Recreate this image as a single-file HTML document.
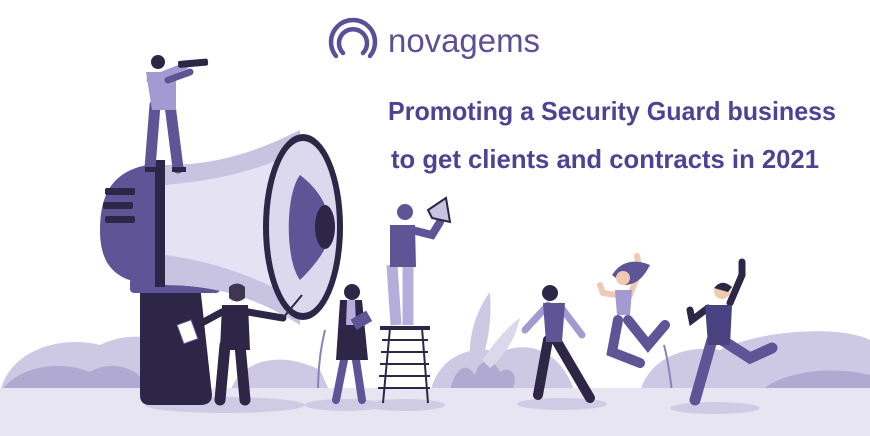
<!DOCTYPE html>
<html><head><meta charset="utf-8"><style>
html,body{margin:0;padding:0;background:#fff;}
svg{display:block}
</style></head><body>
<svg width="870" height="436" viewBox="0 0 870 436" xmlns="http://www.w3.org/2000/svg">
<rect width="870" height="436" fill="#fff"/>
<!-- background bushes -->
<g fill="#cdc8e4">
<path d="M0 392 C10 350 60 335 100 345 C130 330 170 335 190 360 L200 392Z"/>
<path d="M230 392 C240 360 280 350 320 370 L330 392Z"/>
<path d="M430 392 C440 355 470 345 500 352 C530 340 560 350 575 392Z"/>
<path d="M640 392 C650 355 690 345 720 350 C760 330 840 325 870 340 L870 392Z"/>
</g>
<g fill="#b0a9d2">
<path d="M0 392 C20 365 60 360 90 372 C110 360 140 365 150 392Z"/>
<path d="M760 392 C780 372 830 365 870 375 L870 392Z"/>
<path d="M450 390 C455 370 465 360 475 375 C480 355 495 360 500 372 C510 365 520 375 512 390Z"/>
<path d="M470 360 C468 330 480 305 490 292 C492 320 488 345 480 365Z" fill="#cdc8e4"/>
<path d="M482 360 C500 335 510 325 520 318 C515 340 505 355 490 368Z" fill="#dcd8ec"/>
</g>
<g stroke="#8a82bb" stroke-width="2" fill="none">
<path d="M318 392 C318 370 320 350 325 330"/><path d="M672 392 C670 375 668 360 664 345"/>
</g>
<!-- ground -->
<rect x="0" y="388" width="870" height="48" fill="#e7e5f2"/>
<g fill="#cfcbe5">
<ellipse cx="225" cy="405" rx="80" ry="8"/><ellipse cx="345" cy="405" rx="40" ry="6"/>
<ellipse cx="405" cy="405" rx="40" ry="6"/><ellipse cx="562" cy="404" rx="45" ry="6"/>
<ellipse cx="715" cy="408" rx="45" ry="6"/>
</g>
<!-- megaphone handle -->
<path d="M140 285 L200 285 L212 395 Q212 405 200 405 L150 405 Q140 405 140 395Z" fill="#2d2646"/>
<rect x="130" y="278" width="90" height="15" rx="4" fill="#5e5496"/>
<!-- megaphone back -->
<path d="M165 163 C120 165 100 185 100 230 C100 270 120 285 165 285Z" fill="#5e5496"/>
<g fill="#2d2646"><rect x="105" y="188" width="30" height="7" rx="2"/><rect x="103" y="202" width="30" height="7" rx="2"/><rect x="105" y="216" width="30" height="7" rx="2"/></g>
<path d="M155 160 L165 160 L165 287 L155 287Z" fill="#2d2646"/>
<!-- body -->
<path d="M165 165 C220 165 260 150 300 130 L300 325 C260 300 220 285 165 285Z" fill="#e5e2f3"/>
<path d="M165 165 C220 165 260 150 300 130 L300 150 C260 170 220 180 165 185Z" fill="#c9c3e2"/>
<path d="M165 255 C220 262 260 280 300 300 L300 325 C260 300 220 285 165 285Z" fill="#c9c3e2"/>
<!-- bell -->
<ellipse cx="303" cy="227" rx="40" ry="93" fill="#2d2646"/>
<ellipse cx="303" cy="227" rx="34" ry="86" fill="#dcd8ee"/>
<path d="M300 175 C320 190 330 210 330 227 C330 245 320 260 300 280 C285 260 285 195 300 175Z" fill="#5e5496"/>
<ellipse cx="325" cy="227" rx="10" ry="22" fill="#2d2646"/>
<!-- lookout on top -->
<g stroke-linecap="round">
<path d="M155 105 L150 168 M170 105 L178 168" stroke="#5e5496" stroke-width="11"/>
<path d="M146 72 L152 110 L176 110 L176 72Z" fill="#a29ad0"/>
<path d="M168 80 L190 72" stroke="#5e5496" stroke-width="7"/>
<path d="M150 80 L185 66" stroke="#a29ad0" stroke-width="7"/>
</g>
<rect x="178" y="60" width="30" height="7" rx="2" fill="#2d2646" transform="rotate(-5 190 63)"/>
<circle cx="158" cy="62" r="7" fill="#2d2646"/>
<rect x="145" y="167" width="14" height="5" fill="#2d2646"/><rect x="172" y="167" width="14" height="5" fill="#2d2646"/>
<!-- bearded man -->
<g stroke-linecap="round">
<path d="M225 345 L220 400 M240 345 L245 400" stroke="#2d2646" stroke-width="11"/>
<path d="M222 305 L248 305 L250 350 L220 350Z" fill="#2d2646"/>
<path d="M248 312 L283 318 M222 312 L198 325" stroke="#2d2646" stroke-width="7"/>
</g>
<path d="M283 318 L302 295" stroke="#2d2646" stroke-width="2"/>
<circle cx="237" cy="292" r="8" fill="#f0c9b4"/><path d="M229 287 Q237 280 245 287 L245 298 Q237 305 229 298Z" fill="#2d2646" opacity=".9"/>
<rect x="180" y="322" width="15" height="20" fill="#fff" stroke="#5e5496" transform="rotate(-20 187 332)"/>
<!-- woman with clipboard -->
<g stroke-linecap="round">
<path d="M344 360 L336 400 M356 360 L362 400" stroke="#5e5496" stroke-width="8"/>
</g>
<path d="M340 300 L362 300 L368 360 L336 360Z" fill="#2d2646"/>
<path d="M347 300 L355 300 L356 325 L346 325Z" fill="#b5addb"/>
<circle cx="352" cy="292" r="8" fill="#2d2646"/>
<rect x="352" y="315" width="18" height="12" fill="#5e5496" transform="rotate(-30 360 320)"/>
<!-- man on ladder -->
<g stroke="#2d2646" stroke-width="2" fill="none">
<path d="M383 403 L390 328 M428 403 L422 328"/>
<path d="M382 340 L428 340 M381 352 L428 352 M380 364 L429 364 M379 376 L430 376 M378 388 L430 388"/>
</g>
<rect x="380" y="326" width="50" height="4" fill="#2d2646"/>
<path d="M392 265 L396 325 M408 265 L408 325" stroke="#b5addb" stroke-width="11"/>
<path d="M390 225 L415 225 L416 267 L390 267Z" fill="#5e5496"/>
<path d="M412 230 L432 235 L440 222" stroke="#5e5496" stroke-width="8" fill="none" stroke-linecap="round"/>
<circle cx="405" cy="212" r="8" fill="#5e5496"/>
<path d="M428 210 L446 198 L450 222 L432 218Z" fill="#c9c3e2" stroke="#2d2646" stroke-width="2"/>
<!-- runner -->
<g stroke-linecap="round" fill="none">
<path d="M548 340 L538 395 M556 340 L590 398" stroke="#2d2646" stroke-width="10"/>
<path d="M548 305 L525 330 M560 306 L582 335" stroke="#a29ad0" stroke-width="7"/>
</g>
<path d="M543 303 L565 303 L562 342 L546 342Z" fill="#5e5496"/>
<circle cx="550" cy="293" r="8" fill="#2d2646"/>
<!-- jumping woman -->
<g stroke-linecap="round" fill="none">
<path d="M618 320 L612 352 L640 363 M628 320 L648 345 L665 325" stroke="#5e5496" stroke-width="10"/>
<path d="M617 295 L603 293 L600 285 M630 295 L640 270 L637 256" stroke="#f0c9b4" stroke-width="6"/>
</g>
<path d="M615 290 L632 290 L630 315 L617 315Z" fill="#a29ad0"/>
<path d="M612 275 Q625 255 650 265 Q640 285 625 285Z" fill="#5e5496"/>
<circle cx="623" cy="278" r="7" fill="#f0c9b4"/>
<!-- running man right -->
<g stroke-linecap="round" fill="none">
<path d="M712 340 L695 400 M722 340 L750 358 L772 348" stroke="#5e5496" stroke-width="11"/>
<path d="M708 308 L692 320 L690 310 M730 303 L742 275 L742 262" stroke="#2d2646" stroke-width="7"/>
</g>
<path d="M705 305 L732 305 L730 345 L708 345Z" fill="#4a4280"/>
<circle cx="722" cy="291" r="8" fill="#f0c9b4"/><path d="M714 288 Q722 278 732 287 L728 292Z" fill="#2d2646"/>
<!-- logo -->
<path d="M336 56 A22 22 0 1 1 370 56" fill="none" stroke="#5b4f98" stroke-width="4.5" stroke-linecap="round"/>
<path d="M343 53 A14 14 0 1 1 363 53" fill="none" stroke="#5b4f98" stroke-width="4.5" stroke-linecap="round"/>
<text x="388" y="52" font-family="Liberation Sans, sans-serif" font-size="33" fill="#5b4f98" textLength="152" lengthAdjust="spacingAndGlyphs">novagems</text>
<!-- title -->
<text x="612" y="120" text-anchor="middle" font-family="Liberation Sans Narrow, Liberation Sans, sans-serif" font-weight="bold" font-size="26" fill="#4c4394" textLength="448" lengthAdjust="spacingAndGlyphs">Promoting a Security Guard business</text>
<text x="605" y="168" text-anchor="middle" font-family="Liberation Sans Narrow, Liberation Sans, sans-serif" font-weight="bold" font-size="26" fill="#4c4394" textLength="428" lengthAdjust="spacingAndGlyphs">to get clients and contracts in 2021</text>
</svg>
</body></html>
